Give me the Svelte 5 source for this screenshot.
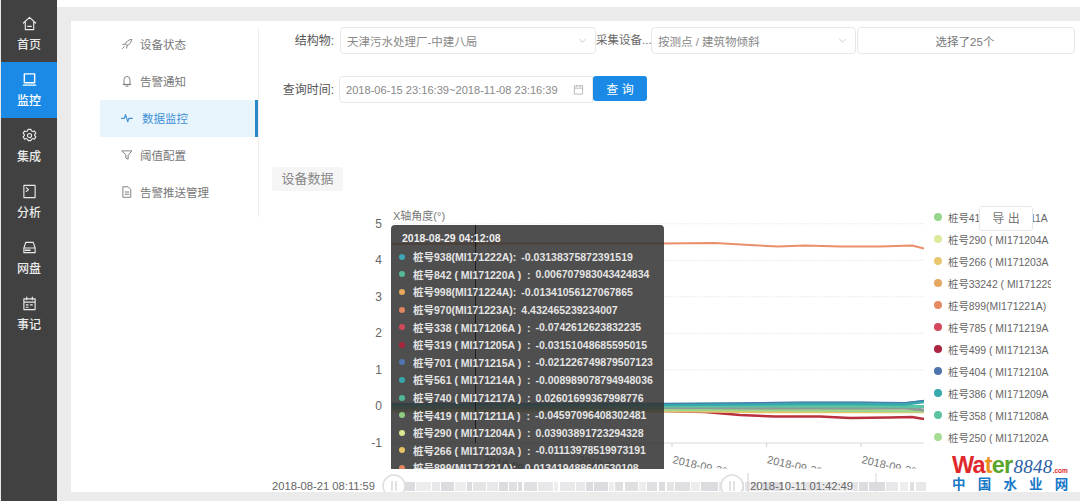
<script lang="ts">
  const sideItems = [
    { label: "首页", icon: "home" },
    { label: "监控", icon: "screen", active: true },
    { label: "集成", icon: "gear" },
    { label: "分析", icon: "term" },
    { label: "网盘", icon: "disk" },
    { label: "事记", icon: "cal" },
  ];

  const menu = [
    { label: "设备状态", icon: "rocket" },
    { label: "告警通知", icon: "bell" },
    { label: "数据监控", icon: "pulse", active: true },
    { label: "阈值配置", icon: "filter" },
    { label: "告警推送管理", icon: "doc" },
  ];

  const tipRows = [
    ["#3fa7b5", "桩号938(MI171222A):", "-0.03138375872391519"],
    ["#55b89a", "桩号842 ( MI171220A )  :", "0.006707983043424834"],
    ["#e6a65c", "桩号998(MI171224A):", "-0.01341056127067865"],
    ["#e08560", "桩号970(MI171223A):", "4.432465239234007"],
    ["#d0485a", "桩号338 ( MI171206A )  :", "-0.0742612623832235"],
    ["#a82438", "桩号319 ( MI171205A )  :", "-0.03151048685595015"],
    ["#4f74b0", "桩号701 ( MI171215A )  :", "-0.021226749879507123"],
    ["#36a8ac", "桩号561 ( MI171214A )  :", "-0.008989078794948036"],
    ["#50b898", "桩号740 ( MI171217A )  :", "0.02601699367998776"],
    ["#90cc80", "桩号419 ( MI171211A )  :", "-0.04597096408302481"],
    ["#dce890", "桩号290 ( MI171204A )  :", "0.03903891723294328"],
    ["#e6c268", "桩号266 ( MI171203A )  :", "-0.01113978519973191"],
    ["#e08560", "桩号899(MI171221A):", "-0.013419488640530108"],
  ];

  const legend = [
    ["#96d68c", "桩号419 ( MI171211A"],
    ["#dcea9a", "桩号290 ( MI171204A"],
    ["#e6c66e", "桩号266 ( MI171203A"],
    ["#e6a860", "桩号33242 ( MI171229A"],
    ["#e68a64", "桩号899(MI171221A)"],
    ["#d4485c", "桩号785 ( MI171219A"],
    ["#ab2540", "桩号499 ( MI171213A"],
    ["#4f74ad", "桩号404 ( MI171210A"],
    ["#36a9ad", "桩号386 ( MI171209A"],
    ["#5cc3a3", "桩号358 ( MI171208A"],
    ["#a6dc94", "桩号250 ( MI171202A"],
  ];

  const yTicks = [5, 4, 3, 2, 1, 0, -1];
  function yPos(v: number): number {
    return 406.3 - v * 36.5;
  }

  const xTicks = [483, 577.5, 672, 766.5, 861];

  // lines are [x, y] in page coordinates
  const series = [
    { c: "#e9906a", w: 2, p: "392,244 500,243.5 600,243.5 660,243.5 715,243 750,245 778,246.5 805,245.5 840,246.5 880,246.5 912,245.5 924,248.5" },
    { c: "#b9303f", w: 2.4, p: "392,410 500,410 600,410.5 660,411 705,412 740,415 775,416.5 820,416.5 850,418 890,417.5 912,417 924,419" },
    { c: "#e6c66e", w: 2.4, p: "392,411 520,411 660,411 760,412 860,412 924,412" },
    { c: "#9cd78c", w: 3, p: "392,409 520,409 660,409.5 760,410 860,410.5 924,411" },
    { c: "#8c9c98", w: 3, p: "392,407.5 520,407.5 660,407.5 760,408 860,408 905,408 924,410" },
    { c: "#5cc3a3", w: 3, p: "392,405.5 520,405.5 660,406 760,406 860,406 924,406.5" },
    { c: "#36a9ad", w: 3.5, p: "392,404.5 520,404.5 660,404.5 740,404 800,403.5 860,403.5 905,404 924,401.5" },
    { c: "#4f74ad", w: 1.2, p: "392,403.5 520,403.5 660,403.5 740,403 800,402 860,402 905,402.5 924,400.5" },
  ];

  // stripes of the dataZoom track
  const stripes: number[][] = [];
  let sx = 405;
  let seed = 7;
  while (sx < 924) {
    seed = (seed * 31 + 11) % 97;
    const w = 4 + (seed % 14);
    stripes.push([sx, w, 0.45 + (seed % 5) * 0.1]);
    sx += w + (seed % 4 === 0 ? 2 : 1);
  }
</script>

{#snippet icon(name: string)}
  <svg class="ico" viewBox="0 0 16 16" fill="none" stroke="currentColor" stroke-width="1.2" stroke-linejoin="round" stroke-linecap="round">
    {#if name === "home"}
      <path d="M1.5 7.500 8 1.500l6.500 6M3.500 6.500V14.500h9V6.500M6 11h4" />
    {:else if name === "screen"}
      <path d="M2.500 2h11v9.500h-11zM1.500 14h13" stroke-width="1.500" />
    {:else if name === "gear"}
      <path d="M6.500 1.500h3l.6 1.600 1.700.7 1.500-.7 1.500 2.600-1.300 1.100v1.400l1.300 1.100-1.500 2.600-1.500-.7-1.700.7-.6 1.600h-3l-.6-1.600-1.700-.7-1.500.7-1.500-2.600 1.300-1.100V6.800L1.200 5.700l1.500-2.600 1.500.7 1.700-.7z" />
      <circle cx="8" cy="8" r="2.200" />
    {:else if name === "term"}
      <path d="M2 1.500h12v13H2zM4.500 4 7 6 4.500 8" />
    {:else if name === "disk"}
      <path d="M4 2.500h8l2 6v5H2v-5zM2 8.500h12" />
      <path d="M3.500 11h5" stroke-width="1.700" />
    {:else if name === "cal"}
      <path d="M2 3h12v11.500H2zM2 6.500h12M5 1v3M11 1v3M4.500 9.500h2M9 9.500h2M4.500 12h2" />
    {:else if name === "rocket"}
      <path d="M14 2c-4 0-6.500 2.200-8 6l2 2c3.800-1.500 6-4 6-8zM6 8 2.500 8.500M8 10l-.5 3.500M4.500 11.500l-2.500 2.500" />
    {:else if name === "bell"}
      <path d="M4 12.500V6a4 4 0 0 1 8 0v6.500zM3 12.500h10M6.800 15h2.400" />
    {:else if name === "pulse"}
      <path d="M1 8.500h3.500L6 3.500l3 9.500 1.500-4.500H15" stroke-width="1.500" />
    {:else if name === "filter"}
      <path d="M1.500 2.500h13L9.500 8.500v5l-3-1.500V8.500z" />
    {:else if name === "doc"}
      <path d="M3 1h6.500L13 4.500V15H3zM5.500 8h5M5.500 11h5" />
    {/if}
  </svg>
{/snippet}

{#snippet chevron()}
  <svg class="chev" viewBox="0 0 10 6" fill="none" stroke="#c4c4c4" stroke-width="1"><path d="M1 1l4 4 4-4" /></svg>
{/snippet}

<div class="page">
  <aside class="side">
    {#each sideItems as item}
      <div class="side-item" class:active={item.active}>
        {@render icon(item.icon)}
        <span>{item.label}</span>
      </div>
    {/each}
  </aside>

  <div class="main">
    <div class="topbar"></div>
    <div class="body">
      <div class="panel">
        <nav class="nav">
          {#each menu as item}
            <div class="nav-item" class:active={item.active}>
              {@render icon(item.icon)}
              <span>{item.label}</span>
            </div>
          {/each}
        </nav>

        <section class="content">
          <div class="row first">
            <span class="lbl">结构物:</span>
            <div class="box sel1">天津污水处理厂-中建八局 {@render chevron()}</div>
            <span class="lbl2">采集设备...</span>
            <div class="box sel2">按测点 / 建筑物倾斜 {@render chevron()}</div>
            <div class="box sel3">选择了25个</div>
          </div>
          <div class="row second">
            <span class="lbl">查询时间:</span>
            <div class="box picker">
              2018-06-15 23:16:39~2018-11-08 23:16:39
              <svg class="cal" viewBox="0 0 12 12" fill="none" stroke="#b5b5b5" stroke-width="1"><path d="M1.500 2h9v9h-9zM1.500 4.500h9M4 1v2M8 1v2" /></svg>
            </div>
            <button class="query">查 询</button>
          </div>
          <div class="tag">设备数据</div>

          <div class="chart">
            <svg class="plot" viewBox="259 205 821 287" width="821" height="287">
              <defs>
                <clipPath id="xclip"><rect x="392" y="444" width="540" height="24.500" /></clipPath>
                <clipPath id="plotclip"><rect x="392" y="210" width="532" height="240" /></clipPath>
              </defs>
              <text x="393" y="220" class="axis-name">X轴角度(°)</text>
              {#each yTicks as t}
                <text x="382" y={yPos(t) + 4} text-anchor="end" class="axis">{t}</text>
                {#if t !== -1}
                  <line x1="392" x2="924" y1={yPos(t)} y2={yPos(t)} stroke="#e6e6e6" stroke-dasharray="1.500 1.500" />
                {/if}
              {/each}
              <line x1="392" x2="924" y1="443" y2="443" stroke="#d8d8d8" stroke-width="1" />
              {#each xTicks as x}
                <line x1={x} x2={x} y1="443" y2="447" stroke="#cfcfcf" />
              {/each}
              <g clip-path="url(#xclip)">
                {#each xTicks as x}
                  <text x={x} y="463" class="axis small" transform="rotate(13 {x} 463)">2018-09-30</text>
                {/each}
              </g>
              <g clip-path="url(#plotclip)">
                {#each series as s}
                  <polyline points={s.p} fill="none" stroke={s.c} stroke-width={s.w} stroke-linejoin="round" />
                {/each}
              </g>
              <circle cx="475" cy="244" r="3" fill="#e9906a" />

              <!-- dataZoom -->
              {#each stripes as s}
                <rect x={s[0]} y="482" width={s[1]} height="9" fill="#d6d6da" opacity={s[2]} />
              {/each}
              <line x1="748" x2="748" y1="473" y2="492" stroke="#d0d0d0" />
              <line x1="876" x2="876" y1="473" y2="492" stroke="#d8d8d8" />
              <circle cx="394" cy="486" r="11" fill="#fff" stroke="#dedede" stroke-width="1.500" />
              <path d="M392 481v10M396 481v10" stroke="#d0d0d0" stroke-width="1.200" />
              <circle cx="732" cy="486" r="11" fill="#fff" stroke="#dedede" stroke-width="1.500" />
              <path d="M730 481v10M734 481v10" stroke="#d0d0d0" stroke-width="1.200" />
              <text x="272" y="490" class="range">2018-08-21 08:11:59</text>
              <text x="750" y="490" class="range">2018-10-11 01:42:49</text>
            </svg>

            <div class="tooltip">
              <span class="cross"></span>
              <div class="tip-title">2018-08-29 04:12:08</div>
              {#each tipRows as r}
                <div class="tip-row">
                  <i style="background:{r[0]}"></i>
                  <span class="name">{r[1]}</span>
                  <span class="val">{r[2]}</span>
                </div>
              {/each}
            </div>

            <div class="legend">
              {#each legend as l}
                <div class="leg-row">
                  <i style="background:{l[0]}"></i>
                  <span>{l[1]}</span>
                </div>
              {/each}
            </div>

            <div class="export">导 出</div>

            <div class="mark">
              <div class="mark-top"><b><em class="r">Wa</em><em class="o">t</em><em class="g">er</em></b><span class="num">8848</span><span class="com">.com</span></div>
              <div class="mark-cn">中国水业网</div>
            </div>
          </div>
        </section>
      </div>
    </div>
  </div>
</div>

<style>
  :global(body) {
    margin: 0;
    overflow: hidden;
    font-family: "Liberation Sans", "Noto Sans CJK SC", sans-serif;
  }

  .page {
    display: flex;
    width: 1080px;
    height: 501px;
    overflow: hidden;
    background: #ebebeb;
  }

  .side {
    box-sizing: border-box;
    width: 57px;
    padding-top: 6px;
    background: #414141;
    border-left: 1px solid #e8e8e8;
    flex: none;
  }
  .side-item {
    box-sizing: border-box;
    height: 56px;
    padding-top: 2px;
    display: flex;
    flex-direction: column;
    align-items: center;
    justify-content: center;
    gap: 6px;
    color: #eaeaea;
    font-size: 12px;
    line-height: 17px;
    font-weight: 500;
  }
  .side-item.active {
    background: #1a8ae6;
    color: #fff;
  }
  .side-item :global(.ico) {
    width: 15px;
    height: 15px;
  }

  .main {
    flex: 1;
    display: flex;
    flex-direction: column;
    min-width: 0;
  }
  .topbar {
    height: 7px;
    background: #fff;
  }
  .body {
    flex: 1;
    padding: 14px 0 9px 14px;
    min-height: 0;
  }
  .panel {
    display: flex;
    height: 100%;
    background: #fff;
  }

  .nav {
    box-sizing: border-box;
    width: 188px;
    height: 190px;
    margin-top: 6px;
    padding: 0 0 0 29px;
    border-right: 1px solid #eeeeee;
    flex: none;
  }
  .nav-item {
    box-sizing: border-box;
    height: 37px;
    display: flex;
    align-items: center;
    gap: 7px;
    padding: 0 0 1px 21px;
    color: #777;
    font-size: 11.500px;
  }
  .nav-item:nth-child(1) {
    height: 34px;
    padding-bottom: 0;
  }
  .nav-item:nth-child(2) {
    height: 39px;
    padding-top: 1px;
    padding-bottom: 0;
  }
  .nav-item.active {
    background: #e9f5fd;
    color: #3f8fd6;
    border-right: 3px solid #2b86c8;
    gap: 9px;
  }
  .nav-item :global(.ico) {
    width: 12px;
    height: 12px;
  }

  .content {
    flex: 1;
    min-width: 0;
    font-size: 11.500px;
    color: #777;
  }
  .row {
    display: flex;
    align-items: flex-start;
    height: 27px;
  }
  .row.first {
    margin-top: 6px;
  }
  .row.second {
    margin-top: 22px;
  }
  .lbl {
    box-sizing: border-box;
    width: 78px;
    margin-right: 3px;
    padding-right: 3px;
    font-size: 12px;
    line-height: 29px;
    text-align: right;
    color: #555;
  }
  .lbl2 {
    width: 55px;
    line-height: 27px;
    color: #666;
    white-space: nowrap;
  }
  .box {
    box-sizing: border-box;
    height: 27px;
    display: flex;
    align-items: center;
    justify-content: space-between;
    padding: 0 8px 0 6px;
    border: 1px solid #e8e8e8;
    border-radius: 4px;
    color: #888;
    background: #fff;
    white-space: nowrap;
  }
  .sel1 {
    width: 256px;
  }
  .sel2 {
    width: 205px;
  }
  .sel3 {
    width: 218px;
    margin-left: 1px;
    justify-content: center;
    color: #777;
  }
  .chev {
    width: 9px;
    height: 5px;
  }
  .picker {
    width: 254px;
    margin-left: -1px;
    border-radius: 4px 0 0 4px;
    font-size: 11.100px;
  }
  .cal {
    width: 11px;
    height: 11px;
  }
  .query {
    width: 54px;
    height: 25px;
    border: none;
    border-radius: 3px;
    background: #1a8ae6;
    color: #fff;
    font-family: inherit;
    font-size: 12px;
    padding: 0;
  }
  .tag {
    width: 71px;
    height: 24px;
    margin: 64px 0 0 13px;
    border-radius: 3px;
    background: #f5f5f5;
    color: #888;
    font-size: 13px;
    line-height: 24px;
    text-align: center;
  }

  .chart {
    position: relative;
    width: 821px;
    height: 287px;
    margin-top: 14px;
  }
  .plot {
    display: block;
    position: absolute;
    left: 0;
    top: 0;
    font-family: "Liberation Sans", "Noto Sans CJK SC", sans-serif;
  }
  .axis {
    fill: #666;
    font-size: 12px;
  }
  .axis.small {
    font-size: 11px;
    fill: #777;
  }
  .axis-name {
    fill: #777;
    font-size: 11px;
  }
  .range {
    fill: #666;
    font-size: 11.200px;
  }

  .tooltip {
    position: absolute;
    left: 132px;
    top: 20px;
    box-sizing: border-box;
    width: 273px;
    height: 244px;
    padding: 5px 0 0 11px;
    overflow: hidden;
    border-radius: 4px 4px 0 0;
    background: rgba(50, 50, 50, 0.86);
    color: #e4e4e4;
    font-size: 10.500px;
    font-weight: 700;
    white-space: nowrap;
  }
  .tip-title {
    position: relative;
    height: 18px;
    line-height: 17px;
    color: #eee;
  }
  .tip-row {
    position: relative;
    display: flex;
    align-items: center;
    height: 17.600px;
    margin-left: -3px;
  }
  .tip-row i {
    width: 6px;
    height: 6px;
    margin-right: 8px;
    border-radius: 50%;
    flex: none;
  }
  .tip-row .name {
    white-space: pre;
  }
  .tip-row .val {
    margin-left: 5px;
  }
  .cross {
    position: absolute;
    left: 84px;
    top: 0;
    width: 1px;
    height: 218px;
    background: #1c1c1c;
  }

  .legend {
    position: absolute;
    left: 674px;
    top: 1px;
    width: 118px;
    overflow: hidden;
    display: flex;
    flex-direction: column;
    color: #666;
    font-size: 10.400px;
  }
  .leg-row {
    height: 22px;
    display: flex;
    align-items: center;
    white-space: nowrap;
  }
  .leg-row i {
    width: 8px;
    height: 8px;
    margin: 0 6px 0 1px;
    border-radius: 50%;
    flex: none;
  }

  .export {
    position: absolute;
    left: 720px;
    top: 1px;
    box-sizing: border-box;
    width: 54px;
    height: 25px;
    border: 1px solid #e8e8e8;
    border-radius: 3px;
    background: #fff;
    color: #777;
    font-size: 12px;
    line-height: 24px;
    text-align: center;
  }

  .mark {
    position: absolute;
    left: 693px;
    top: 249px;
    width: 124px;
  }
  .mark-top {
    display: flex;
    align-items: baseline;
    height: 22px;
    line-height: 22px;
    white-space: nowrap;
  }
  .mark-top b {
    font-size: 23.500px;
    font-weight: 700;
    letter-spacing: -0.800px;
  }
  .mark-top em {
    font-style: normal;
  }
  .r {
    color: #e0272c;
  }
  .o {
    color: #e8931e;
  }
  .g {
    color: #5aa52c;
  }
  .num {
    margin-left: 1px;
    font-family: "Liberation Serif", serif;
    font-style: italic;
    font-size: 19px;
    letter-spacing: 0.300px;
    color: #2c5fa8;
  }
  .com {
    font-size: 6.500px;
    font-weight: 700;
    color: #e0272c;
  }
  .mark-cn {
    margin-top: 1px;
    font-size: 13.500px;
    line-height: 15px;
    font-weight: 700;
    letter-spacing: 12.200px;
    color: #1878c8;
    white-space: nowrap;
  }
</style>
